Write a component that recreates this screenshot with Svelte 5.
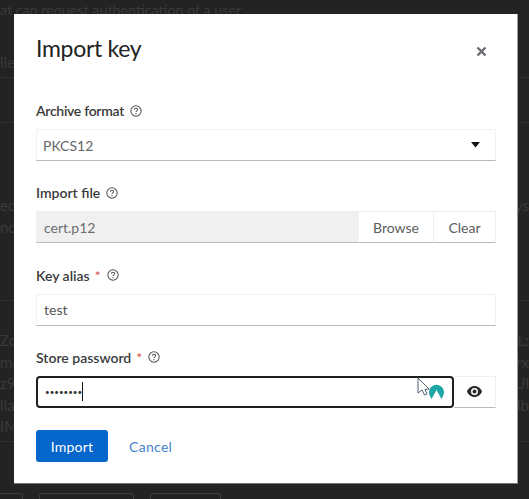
<script>
  const leftRows = ["Zd", "me", "z9", "lia", "IM"];
  const rightRows = ["L:", "rx", "Ul", "lb"];
</script>

<div class="page">
  <div class="behind">
    <p class="intro">at can request authentication of a user</p>
    <div class="row first"><span>lie</span></div>
    <div class="row spacer"></div>
    <div class="row second">
      <div class="col"><span>equ</span><span>nd</span></div>
      <div class="col right"><span>ys</span></div>
    </div>
    <div class="row third">
      <div class="col">{#each leftRows as t}<span>{t}</span>{/each}</div>
      <div class="col right">{#each rightRows as t}<span>{t}</span>{/each}</div>
    </div>
    <div class="btns"><i class="a"></i><i class="b"></i><i class="c"></i></div>
  </div>

  <div class="modal">
    <header class="head">
      <h1>Import key</h1>
      <button class="close" aria-label="Close">
        <svg width="11" height="11" viewBox="0 0 11 11"><path d="M1.500 1.500l8 8M9.500 1.500l-8 8" stroke="#6a6e73" stroke-width="2.400" fill="none"/></svg>
      </button>
    </header>

    <div class="field">
      <div class="label"><span class="tight">Archive format</span> {@render help()}</div>
      <div class="input select">
        <span>PKCS12</span>
        <svg width="9" height="6" viewBox="0 0 9 6"><path d="M0 0h9L4.500 5.500z" fill="#151515"/></svg>
      </div>
    </div>

    <div class="field">
      <div class="label">Import file {@render help()}</div>
      <div class="filerow">
        <div class="input file">cert.p12</div>
        <button class="side browse">Browse</button>
        <button class="side clear">Clear</button>
      </div>
    </div>

    <div class="field">
      <div class="label">Key alias <b>*</b> {@render help()}</div>
      <div class="input">test</div>
    </div>

    <div class="field">
      <div class="label">Store password <b>*</b> {@render help()}</div>
      <div class="pwrow">
        <div class="input pw">
          <span class="dots">••••••••</span><span class="caret"></span>
          <svg class="ext" width="30" height="26" viewBox="0 0 30 26">
            <path d="M13.500 19A7.500 7.500 0 1 1 27.500 19L25.500 23L20.500 14L15.500 23z" fill="#1ea5a5"/>
            <path d="M2 2V17L6 14L8.500 19L11 18L9 13.500L13 13z" fill="#fff" stroke="#2b3a55" stroke-width="0.800"/>
          </svg>
        </div>
        <button class="eye" aria-label="Show password">
          <svg width="15" height="11" viewBox="0 0 15 11"><path fill-rule="evenodd" d="M7.500 0C11 0 13.800 2.400 15 5.500 13.800 8.600 11 11 7.500 11S1.200 8.600 0 5.500C1.200 2.400 4 0 7.500 0zm0 2a3.500 3.500 0 100 7 3.500 3.500 0 000-7zm0 1.500a2 2 0 110 4 2 2 0 010-4z" fill="#2a2a2a"/></svg>
        </button>
      </div>
    </div>

    <footer class="actions">
      <button class="primary">Import</button>
      <button class="link">Cancel</button>
    </footer>
  </div>
</div>

{#snippet help()}
  <svg class="help" width="12" height="12" viewBox="0 0 13 13">
    <circle cx="6.500" cy="6.500" r="5.600" fill="none" stroke="#4f5255" stroke-width="1.100"/>
    <path d="M4.700 5.100c0-1 .8-1.600 1.800-1.600s1.800.6 1.800 1.500c0 1.300-1.800 1.300-1.800 2.500" fill="none" stroke="#4f5255" stroke-width="1.100"/>
    <circle cx="6.500" cy="9.400" r=".7" fill="#4f5255"/>
  </svg>
{/snippet}

<style>
  :global(body) {
    margin: 0;
    background: #232323;
  }

  .page {
    position: relative;
    width: 529px;
    height: 499px;
    overflow: hidden;
    background: #232323;
    font-family: "Lato", "Open Sans", sans-serif;
    color: #151515;
  }

  .behind {
    display: flex;
    flex-direction: column;
    color: #3a3a3a;
    font-size: 15px;
  }

  .intro {
    margin: 0;
    padding-top: 1px;
    box-sizing: border-box;
    height: 40px;
    font-size: 14.300px;
    line-height: 18px;
    white-space: nowrap;
  }

  .row {
    border-bottom: 1px solid #2f2f2f;
    box-sizing: border-box;
    display: flex;
    justify-content: space-between;
  }

  .first { height: 38px; padding-top: 13px; }
  .spacer { height: 45px; }
  .second { height: 178px; padding-top: 72px; }
  .third { height: 141px; padding-top: 29px; }

  .col {
    display: flex;
    flex-direction: column;
    line-height: 21.500px;
  }

  .right { align-items: flex-end; }

  .btns {
    display: flex;
    gap: 16px;
    margin-top: 51px;
  }

  .btns i {
    display: block;
    height: 16px;
    border: 1px solid #3a3f45;
    border-radius: 3px;
    box-sizing: border-box;
  }

  .btns .a { width: 24px; margin-left: -1px; }
  .btns .b { width: 95px; }
  .btns .c { width: 71px; }

  .modal {
    position: absolute;
    left: 14px;
    top: 14px;
    width: 504px;
    height: 470px;
    box-sizing: border-box;
    background: #fff;
    border-right: 1px solid #9a9a9a;
    border-bottom: 1px solid #777;
    padding: 19px 21px 0 22px;
    display: flex;
    flex-direction: column;
  }

  .head {
    display: flex;
    justify-content: space-between;
    align-items: center;
    height: 30px;
    margin-bottom: 37px;
  }

  h1 {
    margin: 0;
    font-size: 23px;
    font-weight: 400;
    letter-spacing: -0.300px;
    line-height: 30px;
    color: #222;
  }

  .close {
    border: 0;
    background: none;
    padding: 0;
    display: flex;
    margin-right: 9px;
    margin-top: 6px;
  }

  .field {
    display: flex;
    flex-direction: column;
    margin-bottom: 21.330px;
  }

  .label {
    display: flex;
    align-items: center;
    gap: 5px;
    height: 21px;
    margin-bottom: 8px;
    font-size: 14px;
    font-weight: 600;
    color: #3a3a3a;
  }

  .tight { letter-spacing: -0.300px; }

  .label b {
    color: #d9534a;
    font-weight: 400;
  }

  .help { margin-left: 1px; }

  .input {
    box-sizing: border-box;
    height: 32px;
    display: flex;
    align-items: center;
    padding: 0 7px;
    font-size: 14px;
    color: #555;
    border: 1px solid #f0f0f0;
    border-bottom: 1px solid #b8bbbe;
  }

  .select {
    justify-content: space-between;
    padding: 0 6px;
    color: #666;
  }

  .select svg { margin-right: 9px; }

  .filerow, .pwrow {
    display: flex;
  }

  .filerow .input, .pwrow .input { flex: 1; }

  .file {
    background: #f0f0f0;
    color: #6a6e73;
  }

  .side {
    box-sizing: border-box;
    height: 32px;
    border: 1px solid #f0f0f0;
    border-bottom: 1px solid #b8bbbe;
    border-left: 0;
    background: #fff;
    font: inherit;
    font-size: 14px;
    color: #5a5d60;
    padding: 0;
  }

  .browse { width: 75px; }
  .clear { width: 62px; }

  .pw {
    position: relative;
    border: 2px solid #1f1f1f;
    border-radius: 4px;
    padding: 0 7px;
  }

  .dots { font-size: 8px; color: #333; }
  .caret { width: 1px; height: 19px; background: #151515; }
  .ext { position: absolute; right: 6px; top: -2px; }

  .eye {
    box-sizing: border-box;
    width: 42px;
    height: 32px;
    border: 1px solid #f0f0f0;
    border-bottom: 1px solid #b8bbbe;
    border-left: 0;
    background: #fff;
    display: flex;
    align-items: center;
    justify-content: center;
    padding: 0;
  }

  .actions {
    display: flex;
    align-items: center;
    gap: 21px;
    margin-top: 1px;
  }

  .primary {
    width: 72px;
    height: 32px;
    border: 0;
    border-radius: 3px;
    background: #0566cc;
    color: #fff;
    font: inherit;
    font-size: 14px;
    letter-spacing: 0.200px;
  }

  .link {
    border: 0;
    background: none;
    padding: 0;
    font: inherit;
    font-size: 14px;
    color: #3f86cf;
    letter-spacing: 0.300px;
  }
</style>
